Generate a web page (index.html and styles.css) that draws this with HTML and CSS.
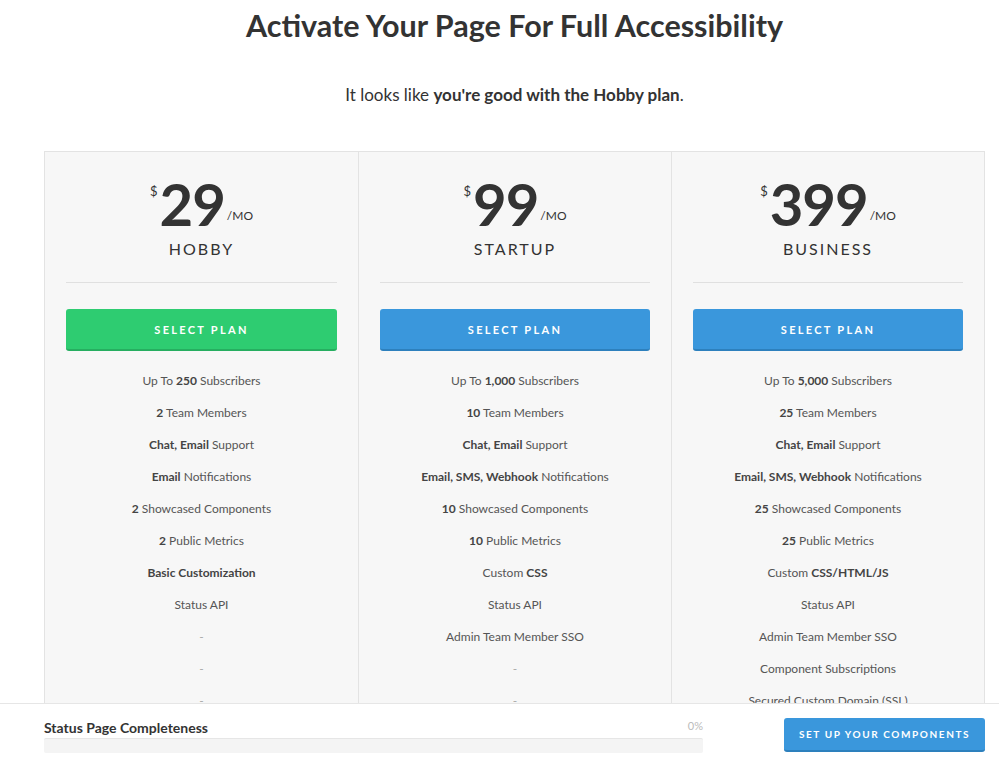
FILE: index.html
```html
<!DOCTYPE html>
<html lang="en">
<head>
  <meta charset="UTF-8">
  <title>Activate Your Page</title>
  <link rel="stylesheet" href="styles.css">
</head>
<body>
  <div class="container">
    <h1>Activate Your Page For Full Accessibility</h1>
    <p class="lead">It looks like <b>you're good with the Hobby plan</b>.</p>

    <div class="plans">
      <!-- hobby -->
      <div class="plan">
        <div class="price"><span class="cur">$</span><span class="amt">29</span><span class="per">/MO</span></div>
        <div class="plan-name">HOBBY</div>
        <hr>
        <button class="select green">SELECT PLAN</button>
        <ul class="features">
          <li>Up To <b>250</b> Subscribers</li>
          <li><b>2</b> Team Members</li>
          <li><b>Chat, Email</b> Support</li>
          <li><b>Email</b> Notifications</li>
          <li><b>2</b> Showcased Components</li>
          <li><b>2</b> Public Metrics</li>
          <li><b>Basic Customization</b></li>
          <li>Status API</li>
          <li class="none">-</li>
          <li class="none">-</li>
          <li class="none">-</li>
        </ul>
      </div>

      <!-- startup -->
      <div class="plan">
        <div class="price"><span class="cur">$</span><span class="amt">99</span><span class="per">/MO</span></div>
        <div class="plan-name">STARTUP</div>
        <hr>
        <button class="select">SELECT PLAN</button>
        <ul class="features">
          <li>Up To <b>1,000</b> Subscribers</li>
          <li><b>10</b> Team Members</li>
          <li><b>Chat, Email</b> Support</li>
          <li><b>Email, SMS, Webhook</b> Notifications</li>
          <li><b>10</b> Showcased Components</li>
          <li><b>10</b> Public Metrics</li>
          <li>Custom <b>CSS</b></li>
          <li>Status API</li>
          <li>Admin Team Member SSO</li>
          <li class="none">-</li>
          <li class="none">-</li>
        </ul>
      </div>

      <!-- business -->
      <div class="plan">
        <div class="price"><span class="cur">$</span><span class="amt">399</span><span class="per">/MO</span></div>
        <div class="plan-name">BUSINESS</div>
        <hr>
        <button class="select">SELECT PLAN</button>
        <ul class="features">
          <li>Up To <b>5,000</b> Subscribers</li>
          <li><b>25</b> Team Members</li>
          <li><b>Chat, Email</b> Support</li>
          <li><b>Email, SMS, Webhook</b> Notifications</li>
          <li><b>25</b> Showcased Components</li>
          <li><b>25</b> Public Metrics</li>
          <li>Custom <b>CSS/HTML/JS</b></li>
          <li>Status API</li>
          <li>Admin Team Member SSO</li>
          <li>Component Subscriptions</li>
          <li>Secured Custom Domain (SSL)</li>
        </ul>
      </div>
    </div>
  </div>

  <!-- fixed progress bar at the bottom -->
  <div class="footer-bar">
    <div class="progress-block">
      <div class="progress-head">
        <span class="progress-title">Status Page Completeness</span>
        <span class="progress-pct">0%</span>
      </div>
      <div class="progress-track"></div>
    </div>
    <button class="setup">SET UP YOUR COMPONENTS</button>
  </div>
</body>
</html>
```

FILE: styles.css
```css
body {
  margin: 0;
  padding: 0;
  font-family: "Lato", "Open Sans", sans-serif;
  background-color: #ffffff;
  color: #333;
  overflow: hidden;
}
.container {
  width: 941px;
  margin-left: 44px;
}
h1 {
  margin: 0;
  padding-top: 7px;
  font-size: 30.5px;
  font-weight: 700;
  text-align: center;
  color: #333;
  line-height: 36px;
}
.lead {
  margin: 41px 0 0;
  font-size: 17px;
  line-height: 22px;
  text-align: center;
  color: #333;
}
.lead b {
  font-weight: 700;
}
.plans {
  display: grid;
  grid-template-columns: 1fr 1fr 1fr;
  margin-top: 45px;
  border: 1px solid #e3e3e3;
  background: #f7f7f7;
}
.plan {
  padding: 0 21px;
  border-left: 1px solid #e3e3e3;
  text-align: center;
}
.plan:first-child {
  border-left: none;
}
.price {
  display: flex;
  justify-content: center;
  align-items: flex-end;
  margin-top: 23px;
  height: 58px;
}
.cur {
  align-self: flex-start;
  font-size: 13px;
  margin-top: 8px;
  margin-right: 2px;
}
.amt {
  font-size: 58px;
  font-weight: 700;
  line-height: 58px;
  letter-spacing: -1px;
}
.per {
  font-size: 12px;
  margin-left: 2px;
  margin-bottom: 10px;
}
.plan-name {
  margin-top: 6px;
  font-size: 16px;
  letter-spacing: 2px;
  line-height: 20px;
}
hr {
  border: none;
  border-top: 1px solid #e0e0e0;
  margin: 23px 0 26px;
}
button.select {
  display: block;
  width: 100%;
  height: 42px;
  border: none;
  border-bottom: 2px solid #2d80bd;
  border-radius: 3px;
  background: #3a97dc;
  color: #fff;
  font-family: inherit;
  font-size: 11px;
  font-weight: 700;
  letter-spacing: 2.3px;
  cursor: pointer;
}
button.select.green {
  background: #2ecc71;
  border-bottom-color: #26ae60;
}
.features {
  list-style: none;
  margin: 14px 0 0;
  padding: 0;
}
.features li {
  height: 32px;
  line-height: 32px;
  font-size: 12px;
  color: #555;
}
.features b {
  color: #444;
}
.features .none {
  color: #aaa;
}
.footer-bar {
  position: fixed;
  left: 0;
  right: 0;
  bottom: 0;
  height: 54px;
  border-top: 1px solid #e6e6e6;
  background: #fff;
  display: flex;
  align-items: center;
  padding-left: 44px;
}
.progress-block {
  width: 659px;
  margin-top: 10px;
}
.progress-head {
  display: flex;
  justify-content: space-between;
  align-items: flex-end;
}
.progress-title {
  font-size: 14px;
  font-weight: 700;
  color: #333;
}
.progress-pct {
  font-size: 11px;
  color: #bbb;
  margin-bottom: 4px;
}
.progress-track {
  height: 14px;
  margin-top: 2px;
  background: #f4f4f4;
  border-top: 1px solid #e6e6e6;
  border-radius: 2px;
}
button.setup {
  margin-left: 81px;
  width: 201px;
  height: 34px;
  margin-top: 8px;
  border: none;
  border-bottom: 2px solid #2d80bd;
  border-radius: 3px;
  background: #3a97dc;
  color: #fff;
  font-family: inherit;
  font-size: 10px;
  font-weight: 700;
  letter-spacing: 1.6px;
  cursor: pointer;
}
```
